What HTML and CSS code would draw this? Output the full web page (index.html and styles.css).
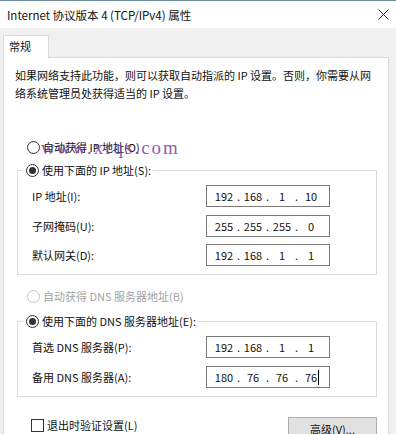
FILE: index.html
```html
<!DOCTYPE html>
<html lang="zh-CN">
<head>
    <meta charset="UTF-8">
    <title>Internet 协议版本 4 (TCP/IPv4) 属性</title>
    <link rel="stylesheet" href="styles.css">
</head>
<body>
    <div class="titlebar">
        <span class="title">Internet 协议版本 4 (TCP/IPv4) 属性</span>
        <svg class="close" width="11" height="11" viewBox="0 0 11 11">
            <path d="M0.5 0.5L10.5 10.5M10.5 0.5L0.5 10.5" stroke="#222" stroke-width="1" fill="none"/>
        </svg>
    </div>

    <div class="client">
        <div class="tabs">
            <div class="tab">常规</div>
        </div>

        <div class="panel">
            <p class="intro">如果网络支持此功能，则可以获取自动指派的 IP 设置。否则，你需要从网<br>络系统管理员处获得适当的 IP 设置。</p>

            <div class="radio-row first">
                <span class="radio"></span>
                <span>自动获得 IP 地址(O)</span>
            </div>

            <fieldset class="group">
                <legend class="radio-row">
                    <span class="radio checked"></span>
                    <span>使用下面的 IP 地址(S):</span>
                </legend>
                <div class="group-body">
                    <div class="field-row">
                        <span class="field-label">IP 地址(I):</span>
                        <div class="ip-box">
                            <span class="octet">192</span><span class="dot">.</span><span class="octet">168</span><span class="dot">.</span><span class="octet">1</span><span class="dot">.</span><span class="octet">10</span>
                        </div>
                    </div>
                    <div class="field-row">
                        <span class="field-label">子网掩码(U):</span>
                        <div class="ip-box">
                            <span class="octet">255</span><span class="dot">.</span><span class="octet">255</span><span class="dot">.</span><span class="octet">255</span><span class="dot">.</span><span class="octet">0</span>
                        </div>
                    </div>
                    <div class="field-row">
                        <span class="field-label">默认网关(D):</span>
                        <div class="ip-box">
                            <span class="octet">192</span><span class="dot">.</span><span class="octet">168</span><span class="dot">.</span><span class="octet">1</span><span class="dot">.</span><span class="octet">1</span>
                        </div>
                    </div>
                </div>
            </fieldset>

            <div class="radio-row dns-auto disabled">
                <span class="radio"></span>
                <span>自动获得 DNS 服务器地址(B)</span>
            </div>

            <fieldset class="group dns">
                <legend class="radio-row">
                    <span class="radio checked"></span>
                    <span>使用下面的 DNS 服务器地址(E):</span>
                </legend>
                <div class="group-body">
                    <div class="field-row">
                        <span class="field-label">首选 DNS 服务器(P):</span>
                        <div class="ip-box">
                            <span class="octet">192</span><span class="dot">.</span><span class="octet">168</span><span class="dot">.</span><span class="octet">1</span><span class="dot">.</span><span class="octet">1</span>
                        </div>
                    </div>
                    <div class="field-row">
                        <span class="field-label">备用 DNS 服务器(A):</span>
                        <div class="ip-box">
                            <span class="octet">180</span><span class="dot">.</span><span class="octet">76</span><span class="dot">.</span><span class="octet">76</span><span class="dot">.</span><span class="octet">76<span class="caret"></span></span>
                        </div>
                    </div>
                </div>
            </fieldset>

            <div class="bottom-row">
                <label class="check-row">
                    <span class="checkbox"></span>
                    <span>退出时验证设置(L)</span>
                </label>
                <div class="button">高级(V)...</div>
            </div>

            <div class="watermark">www.xrqs.com</div>
        </div>
    </div>
</body>
</html>
```

FILE: styles.css
```css
* {
    box-sizing: border-box;
}

body {
    margin: 0;
    width: 396px;
    height: 434px;
    overflow: hidden;
    background-color: #f0f0f0;
    border-top: 1px solid #6f8c9c;
    font-family: "Noto Sans CJK SC", sans-serif;
    font-size: 11px;
    color: #111;
}

.titlebar {
    height: 27px;
    background-color: #fff;
    display: flex;
    align-items: center;
    justify-content: space-between;
    padding: 0 7px 0 7px;
}

.title {
    font-size: 11.5px;
}

.client {
    padding: 7px 7px 0 3px;
}

.tabs {
    display: flex;
}

.tab {
    position: relative;
    z-index: 1;
    width: 46px;
    height: 23px;
    margin-bottom: -1px;
    padding-left: 5px;
    line-height: 21px;
    background-color: #fff;
    border: 1px solid #d9d9d9;
    border-bottom: none;
}

.panel {
    position: relative;
    height: 400px;
    background-color: #fff;
    border: 1px solid #d9d9d9;
}

.intro {
    margin: 8px 0 0 11px;
    line-height: 18px;
    white-space: nowrap;
}

.radio-row {
    display: flex;
    align-items: center;
    gap: 3px;
    height: 18px;
    white-space: nowrap;
}

.radio-row.first {
    margin-top: 36px;
    padding-left: 23px;
}

.radio-row.dns-auto {
    margin-top: 12px;
    padding-left: 23px;
}

.radio-row.disabled {
    color: #a3a3a3;
}

.radio {
    width: 13px;
    height: 13px;
    border: 1px solid #333;
    border-radius: 50%;
    background-color: #fff;
    display: flex;
    align-items: center;
    justify-content: center;
}

.disabled .radio {
    border-color: #c4c4c4;
}

.radio.checked::after {
    content: "";
    width: 7px;
    height: 7px;
    border-radius: 50%;
    background-color: #333;
}

.group {
    margin: 5px 11px 0 13px;
    padding: 0;
    border: 1px solid #dcdcdc;
}

.group.dns {
    margin-top: 7px;
}

.group legend {
    margin-left: 5px;
    padding: 0 2px 0 3px;
}

.group-body {
    padding: 6px 0 8px 14px;
}

.field-row {
    display: flex;
    align-items: center;
    height: 22px;
}

.field-row + .field-row {
    margin-top: 7.5px;
}

.field-label {
    width: 174px;
}

.ip-box {
    display: flex;
    align-items: center;
    width: 124px;
    height: 22px;
    padding-left: 5px;
    border: 1px solid #7a7a7a;
    font-size: 11px;
}

.octet {
    width: 24px;
    text-align: center;
    position: relative;
}

.dot {
    width: 5px;
    text-align: center;
}

.caret {
    position: absolute;
    top: 1px;
    width: 1px;
    height: 15px;
    margin-left: 1px;
    background-color: #000;
}

.bottom-row {
    display: flex;
    justify-content: space-between;
    align-items: flex-start;
    margin-top: 20px;
    padding: 0 11px 0 27px;
}

.check-row {
    display: flex;
    align-items: center;
    gap: 3px;
    margin-top: 2px;
    height: 13px;
}

.checkbox {
    width: 13px;
    height: 13px;
    border: 1px solid #333;
    background-color: #fff;
}

.button {
    width: 89px;
    height: 24px;
    line-height: 22px;
    text-align: center;
    background-color: #e1e1e1;
    border: 1px solid #adadad;
}

.watermark {
    position: absolute;
    left: 37px;
    top: 80px;
    line-height: 20px;
    font-family: "Liberation Serif", serif;
    font-size: 19px;
    letter-spacing: 2px;
    color: #7d3fa3;
    opacity: 0.85;
    pointer-events: none;
}
```
